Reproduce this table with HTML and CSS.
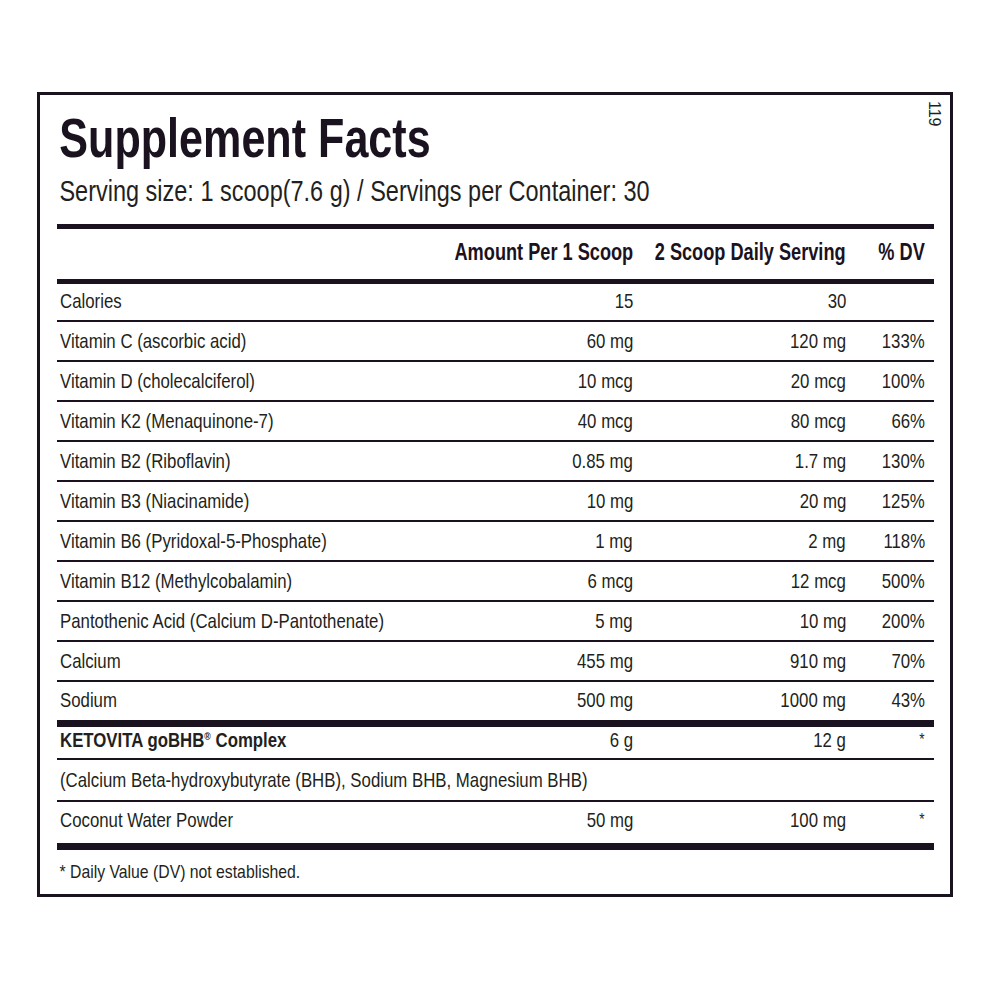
FILE: index.html
```html
<!DOCTYPE html>
<html lang="en">
<head>
    <meta charset="UTF-8">
    <title>Supplement Facts</title>
    <link rel="stylesheet" href="styles.css">
</head>
<body>

    <div class="panel">
        <span class="code">119</span>

        <h1 class="title">Supplement Facts</h1>
        <p class="serving">Serving size: 1 scoop(7.6 g) / Servings per Container: 30</p>

        <div class="rule thick"></div>

        <div class="row head">
            <span></span>
            <span class="num">Amount Per 1 Scoop</span>
            <span class="num">2 Scoop Daily Serving</span>
            <span class="num">% DV</span>
        </div>

        <div class="rule thick"></div>

        <div class="row first"><span>Calories</span><span class="num">15</span><span class="num">30</span><span class="num"></span></div>
        <div class="row"><span>Vitamin C (ascorbic acid)</span><span class="num">60 mg</span><span class="num">120 mg</span><span class="num">133%</span></div>
        <div class="row"><span>Vitamin D (cholecalciferol)</span><span class="num">10 mcg</span><span class="num">20 mcg</span><span class="num">100%</span></div>
        <div class="row"><span>Vitamin K2 (Menaquinone-7)</span><span class="num">40 mcg</span><span class="num">80 mcg</span><span class="num">66%</span></div>
        <div class="row"><span>Vitamin B2 (Riboflavin)</span><span class="num">0.85 mg</span><span class="num">1.7 mg</span><span class="num">130%</span></div>
        <div class="row"><span>Vitamin B3 (Niacinamide)</span><span class="num">10 mg</span><span class="num">20 mg</span><span class="num">125%</span></div>
        <div class="row"><span>Vitamin B6 (Pyridoxal-5-Phosphate)</span><span class="num">1 mg</span><span class="num">2 mg</span><span class="num">118%</span></div>
        <div class="row"><span>Vitamin B12 (Methylcobalamin)</span><span class="num">6 mcg</span><span class="num">12 mcg</span><span class="num">500%</span></div>
        <div class="row"><span>Pantothenic Acid (Calcium D-Pantothenate)</span><span class="num">5 mg</span><span class="num">10 mg</span><span class="num">200%</span></div>
        <div class="row"><span>Calcium</span><span class="num">455 mg</span><span class="num">910 mg</span><span class="num">70%</span></div>
        <div class="row last"><span>Sodium</span><span class="num">500 mg</span><span class="num">1000 mg</span><span class="num">43%</span></div>

        <div class="rule heavy"></div>

        <div class="row short"><span class="bold">KETOVITA goBHB<sup>&reg;</sup> Complex</span><span class="num">6 g</span><span class="num">12 g</span><span class="num star">*</span></div>
        <div class="row sub"><span class="wide">(Calcium Beta-hydroxybutyrate (BHB), Sodium BHB, Magnesium BHB)</span></div>
        <div class="row last tall"><span>Coconut Water Powder</span><span class="num">50 mg</span><span class="num">100 mg</span><span class="num star">*</span></div>

        <div class="rule heavy"></div>

        <p class="note">* Daily Value (DV) not established.</p>
    </div>

</body>
</html>
```

FILE: styles.css
```css
body {
    margin: 0;
    padding: 92px 0 0 37px;
    background-color: #fff;
    font-family: "Liberation Sans", Arial, sans-serif;
    color: #231f20;
}
.panel {
    position: relative;
    box-sizing: border-box;
    width: 916px;
    height: 805px;
    border: 3px solid #1b1220;
    padding: 0 16px 0 17px;
}
.code {
    position: absolute;
    top: 6px;
    right: 7px;
    writing-mode: vertical-rl;
    font-size: 16px;
    line-height: 17px;
    color: #231f20;
}

/* the label face is a condensed grotesque, so the text is narrowed */
.title,
.serving,
.note,
.row > span {
    transform-origin: left center;
    white-space: nowrap;
}
.title {
    margin: 0;
    padding: 12px 0 0 3px;
    height: 65px;
    font-size: 56px;
    line-height: 61px;
    font-weight: bold;
    color: #1b1220;
    transform: scaleX(0.77);
}
.serving {
    margin: 0;
    padding: 0 0 0 3px;
    height: 52px;
    font-size: 29px;
    line-height: 38px;
    transform: scaleX(0.81);
}
.rule {
    background-color: #1b1220;
}
.rule.thick {
    height: 5px;
}
.rule.heavy {
    height: 7px;
}
.row {
    display: grid;
    grid-template-columns: minmax(0, 1fr) 200px 213px 79px;
    align-items: center;
    box-sizing: border-box;
    height: 40px;
    padding: 0 9px 0 3px;
    border-bottom: 2px solid #1b1220;
    font-size: 21px;
}
.row > span {
    display: block;
    transform: scaleX(0.8);
}
.row > .num {
    justify-self: end;
    text-align: right;
    transform-origin: right center;
}
.row.first {
    height: 38px;
    padding-bottom: 3px;
}
.row.last {
    height: 38px;
    padding-bottom: 2px;
    border-bottom: none;
}
.row.short {
    height: 33px;
    padding-bottom: 5px;
}
.row.sub {
    height: 42px;
}
.row.tall {
    height: 41px;
    padding-bottom: 5px;
}
.row.head {
    height: 50px;
    padding-bottom: 4px;
    border-bottom: none;
    font-size: 23px;
    font-weight: bold;
    color: #1b1220;
}
.row.head > span {
    transform: scaleX(0.79);
}
.bold {
    font-weight: bold;
}
.bold sup {
    font-size: 11px;
    vertical-align: 7px;
}
.row > .star {
    font-size: 17px;
}
.row > .wide {
    grid-column: 1 / -1;
}
.note {
    margin: 0;
    padding: 10px 0 0 3px;
    font-size: 19px;
    line-height: 24px;
    transform: scaleX(0.83);
}
```
